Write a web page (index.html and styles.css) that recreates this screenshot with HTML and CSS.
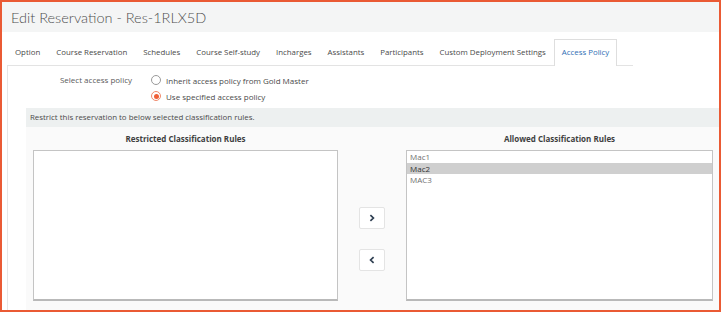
FILE: index.html
```html
<!DOCTYPE html>
<html>
<head>
<meta charset="utf-8">
<link rel="stylesheet" href="styles.css">
</head>
<body>
<div class="frame">
  <header class="page-head"><h1 class="title">Edit Reservation - Res-1RLX5D</h1></header>
  <nav class="tabs">
    <span class="tab">Option</span>
    <span class="tab">Course Reservation</span>
    <span class="tab">Schedules</span>
    <span class="tab">Course Self-study</span>
    <span class="tab">Incharges</span>
    <span class="tab">Assistants</span>
    <span class="tab">Participants</span>
    <span class="tab">Custom Deployment Settings</span>
    <span class="tab active">Access Policy</span>
  </nav>
  <section class="panel">
    <div class="policy">
      <div class="policy-label">Select access policy</div>
      <div class="policy-options">
        <label class="radio"><span class="radio-dot"></span>Inherit access policy from Gold Master</label>
        <label class="radio checked"><span class="radio-dot"></span>Use specified access policy</label>
      </div>
    </div>
    <div class="notice">Restrict this reservation to below selected classification rules.</div>
    <div class="rules">
      <div class="rules-head">Restricted Classification Rules</div>
      <div></div>
      <div class="rules-head">Allowed Classification Rules</div>
      <div class="listbox"></div>
      <div class="movers">
        <button class="mover" type="button"><svg width="6" height="8" viewBox="0 0 6 8"><path d="M1.4 1.2 L4.4 4 L1.4 6.8" fill="none" stroke="#2f3f52" stroke-width="1.7"/></svg></button>
        <button class="mover" type="button"><svg width="6" height="8" viewBox="0 0 6 8"><path d="M4.6 1.2 L1.6 4 L4.6 6.8" fill="none" stroke="#2f3f52" stroke-width="1.7"/></svg></button>
      </div>
      <div class="listbox">
        <div class="opt">Mac1</div>
        <div class="opt selected">Mac2</div>
        <div class="opt">MAC3</div>
      </div>
    </div>
  </section>
</div>
</body>
</html>
```
FILE: styles.css
```css
html, body {
  margin: 0;
  padding: 0;
  background: #fff;
}
.frame {
  box-sizing: border-box;
  width: 721px;
  height: 312px;
  border: 2px solid #ea5a34;
  font-family: "Open Sans", sans-serif;
  color: #4a4a4a;
  overflow: hidden;
  display: flex;
  flex-direction: column;
}
.page-head {
  height: 30px;
  flex: none;
  background: #f4f5f5;
  padding-left: 9px;
  display: flex;
  align-items: center;
}
.title {
  margin: 0;
  font-family: Lato, sans-serif;
  font-weight: 300;
  font-size: 14.5px;
  color: #4f4f4f;
}
.tabs {
  flex: none;
  margin-left: 5px;
  width: 626px;
  padding-top: 7px;
  display: flex;
  border-bottom: 1px solid #e3e3e3;
}
.tab {
  box-sizing: border-box;
  height: 26px;
  line-height: 25px;
  padding: 0 7px;
  border: 1px solid transparent;
  border-bottom: 0;
  font-size: 7.85px;
  color: #4a4a4a;
  white-space: nowrap;
}
.tab.active {
  height: 27px;
  margin-bottom: -1px;
  background: #fff;
  border-color: #dedede;
  color: #2f6fb5;
}
.panel {
  flex: 1;
  margin-left: 5px;
  border-left: 1px solid #e6e6e6;
  display: flex;
  flex-direction: column;
}
.policy {
  display: grid;
  grid-template-columns: 124px auto;
  column-gap: 19px;
  padding: 6px 0 4px;
  font-size: 8px;
}
.policy-label {
  text-align: right;
  line-height: 16px;
  color: #5a5a5a;
}
.policy-options {
  display: flex;
  flex-direction: column;
}
.radio {
  display: flex;
  align-items: center;
  height: 16px;
  gap: 5px;
  color: #4a4a4a;
}
.radio-dot {
  box-sizing: border-box;
  width: 10px;
  height: 10px;
  border-radius: 50%;
  border: 1px solid #9a9a9a;
  background: #fff;
  display: flex;
  align-items: center;
  justify-content: center;
}
.radio.checked .radio-dot {
  border-color: #f08a6c;
}
.radio.checked .radio-dot::after {
  content: "";
  width: 5px;
  height: 5px;
  border-radius: 50%;
  background: #ef5f37;
}
.notice {
  margin-left: 18px;
  height: 19px;
  line-height: 19px;
  padding-left: 4px;
  background: #edf0f0;
  font-size: 7.9px;
  color: #4a4a4a;
}
.rules {
  flex: 1;
  margin-left: 18px;
  background: #fafafa;
  padding: 0 6px 0 7px;
  display: grid;
  grid-template-columns: 305px 68px 307px;
  grid-template-rows: 23px 151px;
}
.rules-head {
  padding-top: 3px;
  line-height: 18px;
  text-align: center;
  font-weight: 700;
  font-size: 8px;
  color: #3f3f3f;
}
.listbox {
  box-sizing: border-box;
  background: #fff;
  border: 1px solid #c4c4c4;
  border-bottom: 2px solid #b9b9b9;
}
.opt {
  line-height: 11.5px;
  padding-left: 3px;
  font-size: 8px;
  color: #707070;
}
.opt.selected {
  background: #cfcfcf;
  color: #333;
}
.movers {
  display: flex;
  flex-direction: column;
  align-items: center;
  padding-top: 57px;
  gap: 20px;
}
.mover {
  box-sizing: border-box;
  width: 26px;
  height: 22px;
  padding: 0;
  background: #fff;
  border: 1px solid #e4e4e4;
  border-radius: 2px;
  display: flex;
  align-items: center;
  justify-content: center;
}
```
